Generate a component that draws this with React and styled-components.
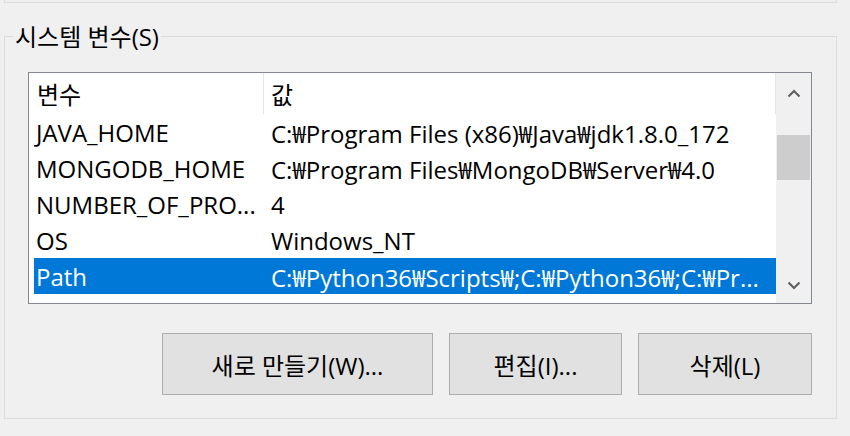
import React from "react";
import styled, { createGlobalStyle } from "styled-components";

const Global = createGlobalStyle`
  html, body { margin: 0; padding: 0; background: #f0f0f0; }
  body {
    font-family: "Open Sans", "Noto Sans CJK KR", "Noto Sans", sans-serif;
    font-size: 24px;
    color: #000;
  }
`;

const Page = styled.div`
  width: 850px;
  height: 436px;
  overflow: hidden;
  display: flex;
  flex-direction: column;
  background: #f0f0f0;
`;

const PrevGroup = styled.div`
  margin-left: 4px;
  width: 833px;
  height: 3px;
  box-sizing: border-box;
  border: 1px solid #dcdcdc;
  border-top: none;
`;

const Group = styled.section`
  position: relative;
  margin: 33px 0 0 4px;
  width: 833px;
  height: 383px;
  box-sizing: border-box;
  border: 1px solid #dcdcdc;
  padding: 35px 24px 0 23px;
  display: flex;
  flex-direction: column;
`;

const GroupTitle = styled.div`
  position: absolute;
  left: 8px;
  top: -12px;
  padding: 0 2px;
  line-height: 24px;
  background: #f0f0f0;
  white-space: nowrap;
`;

const List = styled.div`
  height: 232px;
  box-sizing: border-box;
  border: 1px solid #828790;
  background: #fff;
  display: flex;
`;

const Content = styled.div`
  flex: 1;
  display: flex;
  flex-direction: column;
  overflow: hidden;
`;

const HeaderRow = styled.div`
  height: 41px;
  margin-left: 5px;
  display: grid;
  grid-template-columns: 229px 513px;
`;

const HeaderCell = styled.div`
  display: flex;
  align-items: center;
  box-sizing: border-box;
  padding-left: ${(p) => (p.$first ? "3px" : "7px")};
  border-left: ${(p) => (p.$first ? "none" : "1px solid #e5e5e5")};
  border-right: ${(p) => (p.$first ? "none" : "1px solid #e5e5e5")};
  white-space: nowrap;
`;

const Row = styled.div`
  height: 36px;
  margin-left: 5px;
  display: grid;
  grid-template-columns: 229px 1fr;
  background: ${(p) => (p.$selected ? "#0078d7" : "transparent")};
  color: ${(p) => (p.$selected ? "#fff" : "#000")};
`;

const Cell = styled.div`
  display: flex;
  align-items: center;
  padding-left: ${(p) => (p.$first ? "2px" : "8px")};
  white-space: nowrap;
  overflow: hidden;
`;

const ScrollBar = styled.div`
  width: 35px;
  background: #f0f0f0;
  display: flex;
  flex-direction: column;
`;

const ArrowButton = styled.div`
  height: ${(p) => p.$h}px;
  display: flex;
  align-items: center;
  justify-content: center;
`;

const Track = styled.div`
  flex: 1;
  padding: 21px 1px 0 1px;
`;

const Thumb = styled.div`
  height: 45px;
  background: #cdcdcd;
`;

const Buttons = styled.div`
  margin-top: 29px;
  display: flex;
  justify-content: flex-end;
  gap: 16px;
`;

const Button = styled.button`
  width: ${(p) => p.$w}px;
  height: 62px;
  box-sizing: border-box;
  border: 1px solid #adadad;
  background: #e1e1e1;
  font-family: inherit;
  font-size: 24px;
  color: #000;
  padding: 0;
  display: flex;
  align-items: center;
  justify-content: center;
  white-space: nowrap;
`;

const Chevron = ({ down }) => (
  <svg width="14" height="9" viewBox="0 0 14 9">
    <polyline
      points={down ? "1.5,1.5 7,7 12.5,1.5" : "1.5,7.5 7,2 12.5,7.5"}
      fill="none"
      stroke="#606060"
      strokeWidth="2.2"
    />
  </svg>
);

const rows = [
  ["JAVA_HOME", "C:₩Program Files (x86)₩Java₩jdk1.8.0_172"],
  ["MONGODB_HOME", "C:₩Program Files₩MongoDB₩Server₩4.0"],
  ["NUMBER_OF_PRO...", "4"],
  ["OS", "Windows_NT"],
  ["Path", "C:₩Python36₩Scripts₩;C:₩Python36₩;C:₩Pr..."],
];

export default function App() {
  return (
    <Page>
      <Global />
      <PrevGroup />
      <Group>
        <GroupTitle>시스템 변수(S)</GroupTitle>
        <List>
          <Content>
            <HeaderRow>
              <HeaderCell $first>변수</HeaderCell>
              <HeaderCell>값</HeaderCell>
            </HeaderRow>
            {rows.map(([k, v], i) => (
              <Row key={k} $selected={i === rows.length - 1}>
                <Cell $first>{k}</Cell>
                <Cell>{v}</Cell>
              </Row>
            ))}
          </Content>
          <ScrollBar>
            <ArrowButton $h={41}>
              <Chevron />
            </ArrowButton>
            <Track>
              <Thumb />
            </Track>
            <ArrowButton $h={36}>
              <Chevron down />
            </ArrowButton>
          </ScrollBar>
        </List>
        <Buttons>
          <Button $w={271}>새로 만들기(W)...</Button>
          <Button $w={173}>편집(I)...</Button>
          <Button $w={174}>삭제(L)</Button>
        </Buttons>
      </Group>
    </Page>
  );
}
